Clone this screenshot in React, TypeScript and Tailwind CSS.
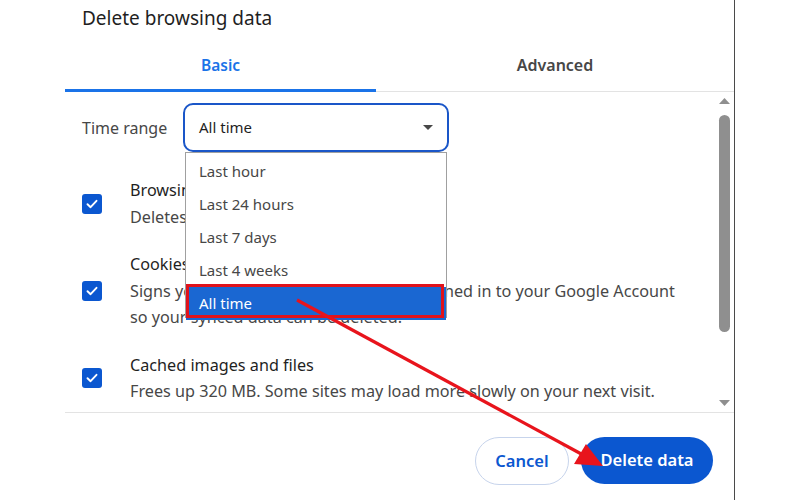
import React from 'react';

const font = { fontFamily: '"Noto Sans", "Open Sans", sans-serif' };

function CheckBox() {
  return (
    <div className="w-[20px] h-[20px] rounded-[3px] bg-[#0b57d0] flex items-center justify-center shrink-0">
      <svg width="14" height="14" viewBox="0 0 14 14">
        <path d="M2.5 7.2 L5.6 10.2 L11.5 3.8" fill="none" stroke="white" strokeWidth="1.9" strokeLinecap="round" strokeLinejoin="round" />
      </svg>
    </div>
  );
}

const rows = [
  {
    title: 'Browsing history',
    lines: ['Deletes history from all synced devices'],
  },
  {
    title: 'Cookies and other site data',
    lines: ["Signs you out of most sites. You'll stay signed in to your Google Account", 'so your synced data can be deleted.'],
  },
  {
    title: 'Cached images and files',
    lines: ['Frees up 320 MB. Some sites may load more slowly on your next visit.'],
  },
];

const options = ['Last hour', 'Last 24 hours', 'Last 7 days', 'Last 4 weeks', 'All time'];

export default function App() {
  return (
    <div className="relative w-[800px] h-[500px] bg-white overflow-hidden flex" style={font}>
      {/* Dialog */}
      <div className="w-[735px] h-full border-r border-[#4a4a4a] flex flex-col">
        <div className="pl-[82px] pt-[4px] h-[44px] text-[19px] text-[#1f1f1f]">Delete browsing data</div>

        {/* Tabs */}
        <div className="ml-[65px] flex h-[48px] border-b border-[#e3e3e3]">
          <div className="w-[311px] flex items-center justify-center pb-[1px] border-b-[3px] border-[#1a73e8] -mb-[1px] text-[15.5px] font-semibold text-[#1a73e8]">
            Basic
          </div>
          <div className="flex-1 flex items-center justify-center pb-[6px] text-[16px] font-semibold text-[#474747]">Advanced</div>
        </div>

        {/* Scroll area */}
        <div className="ml-[65px] h-[321px] flex border-b border-[#e3e3e3]">
          <div className="flex-1 pl-[17px]">
            <div className="mt-[11px] flex items-center">
              <div className="w-[101px] text-[16px] text-[#474747]">Time range</div>
              <div className="w-[266px] h-[49px] rounded-[10px] border-2 border-[#1a56c8] flex items-center justify-between pl-[14px] pr-[14px] text-[15px] text-[#1f1f1f]">
                <span>All time</span>
                <svg width="10" height="5" viewBox="0 0 10 5">
                  <path d="M0 0 L10 0 L5 5 Z" fill="#474747" />
                </svg>
              </div>
            </div>

            <div className="mt-[25px] flex flex-col gap-[21px]">
              {rows.map((r) => (
                <div key={r.title} className="flex items-center gap-[28px]">
                  <CheckBox />
                  <div className="text-[16.2px] leading-[26.5px] whitespace-nowrap">
                    <div className="text-[#1f1f1f]">{r.title}</div>
                    {r.lines.map((l) => (
                      <div key={l} className="text-[#474747]">{l}</div>
                    ))}
                  </div>
                </div>
              ))}
            </div>
          </div>

          {/* Scrollbar */}
          <div className="w-[15px] mr-[2px] flex flex-col items-center">
            <svg className="mt-[6px]" width="11" height="6" viewBox="0 0 11 6">
              <path d="M0 6 L5.5 0 L11 6 Z" fill="#8f8f8f" />
            </svg>
            <div className="mt-[11px] w-[11px] h-[217px] rounded-full bg-[#8f8f8f]" />
            <div className="flex-1" />
            <svg className="mb-[6px]" width="11" height="6" viewBox="0 0 11 6">
              <path d="M0 0 L11 0 L5.5 6 Z" fill="#8f8f8f" />
            </svg>
          </div>
        </div>

        {/* Footer */}
        <div className="flex justify-end gap-[12px] pt-[24px] pr-[21px]">
          <button className="w-[94px] h-[48px] rounded-full border border-[#c7d4ec] text-[#0b57d0] text-[16.5px] font-semibold">
            Cancel
          </button>
          <button className="w-[132px] h-[47px] rounded-full bg-[#0b57d0] text-white text-[16.5px] font-semibold">
            Delete data
          </button>
        </div>
      </div>

      {/* Open dropdown list */}
      <div className="absolute left-[185px] top-[152px] w-[262px] h-[166px] bg-white border border-[#a0a0a0] pt-[2px]">
        {options.map((o) => (
          <div
            key={o}
            className={
              o === 'All time'
                ? 'relative h-[33px] flex items-center pl-[13px] text-[15px] bg-[#1a67d2] text-white'
                : 'h-[33px] flex items-center pl-[13px] text-[15px] text-[#474747]'
            }
          >
            {o}
            {o === 'All time' && (
              <div className="absolute left-0 right-[2px] -top-[3px] bottom-[2px] border-[3px] border-[#e0131c]" />
            )}
          </div>
        ))}
      </div>

      {/* Annotation arrow */}
      <svg className="absolute left-0 top-0 pointer-events-none" width="800" height="500" viewBox="0 0 800 500">
        <line x1="297" y1="300" x2="585" y2="456" stroke="#e8141c" strokeWidth="3.2" />
        <polygon points="603,466 574,464 586,444" fill="#e8141c" />
      </svg>
    </div>
  );
}
